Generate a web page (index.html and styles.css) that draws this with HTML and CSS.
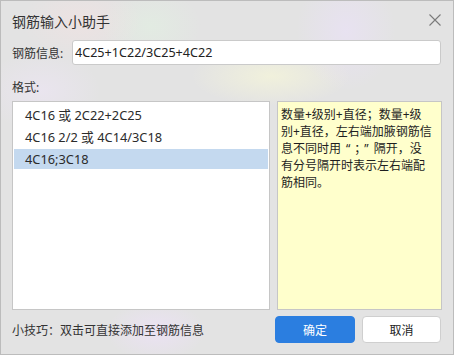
FILE: index.html
```html
<!DOCTYPE html>
<html lang="zh-CN">
<head>
<meta charset="UTF-8" />
<title>钢筋输入小助手</title>
<link rel="stylesheet" href="styles.css">
</head>
<body>

<div class="dialog">
  <div class="titlebar">
    <span class="title">钢筋输入小助手</span>
    <svg class="close" width="12" height="12" viewBox="0 0 12 12">
      <path d="M0.5 0.5 L11.5 11.5 M11.5 0.5 L0.5 11.5" stroke="#7a7a7a" stroke-width="1.1" fill="none"/>
    </svg>
  </div>

  <div class="field">
    <label for="rebarInput">钢筋信息:</label>
    <input id="rebarInput" type="text" value="4C25+1C22/3C25+4C22" />
  </div>

  <div class="section-label">格式:</div>

  <div class="panels">
    <ul class="format-list">
      <li>4C16 或 2C22+2C25</li>
      <li>4C16 2/2 或 4C14/3C18</li>
      <li class="selected">4C16;3C18</li>
    </ul>
    <div class="hint-box">数量+级别+直径；数量+级<br>别+直径，左右端加腋钢筋信<br>息不同时用<span class="sep">“；”</span>隔开，没<br>有分号隔开时表示左右端配<br>筋相同。</div>
  </div>

  <div class="footer">
    <span class="tip">小技巧：双击可直接添加至钢筋信息</span>
    <div class="buttons">
      <button class="btn primary">确定</button>
      <button class="btn">取消</button>
    </div>
  </div>
</div>

</body>
</html>
```

FILE: styles.css
```css
html, body {
  margin: 0;
  padding: 0;
}

body {
  font-family: "Segoe UI", "Noto Sans", "Noto Sans CJK SC", sans-serif;
  color: #2b2b2b;
}

.dialog {
  box-sizing: border-box;
  width: 454px;
  height: 355px;
  border: 1px solid #bcbcbc;
  padding: 0 12px 0 11px;
  background:
    radial-gradient(ellipse 60px 40px at 80px 20px, rgba(255, 225, 225, 0.35), transparent),
    radial-gradient(ellipse 50px 40px at 150px 25px, rgba(225, 245, 225, 0.45), transparent),
    radial-gradient(ellipse 50px 60px at 345px 30px, rgba(235, 225, 250, 0.6), transparent),
    radial-gradient(ellipse 80px 30px at 270px 75px, rgba(250, 250, 215, 0.6), transparent),
    radial-gradient(ellipse 60px 40px at 40px 90px, rgba(240, 230, 250, 0.5), transparent),
    radial-gradient(ellipse 50px 30px at 155px 330px, rgba(238, 225, 250, 0.7), transparent),
    #e3e3e3;
}

.titlebar {
  height: 39px;
  display: flex;
  align-items: center;
  justify-content: space-between;
}

.title {
  font-size: 14px;
  color: #333;
}

.close {
  margin-top: -2px;
}

.field {
  display: flex;
  align-items: center;
  gap: 7px;
  height: 25px;
}

.field label {
  font-size: 12px;
  color: #333;
  width: 53px;
}

.field input {
  flex: 1;
  box-sizing: border-box;
  height: 25px;
  border: 1px solid #cacaca;
  border-radius: 3px;
  padding: 0 2px;
  font-family: inherit;
  font-size: 12.6px;
  color: #222;
  background: #fff;
  outline: none;
}

.section-label {
  font-size: 12px;
  color: #333;
  height: 22px;
  line-height: 22px;
  margin-top: 12px;
}

.panels {
  margin-top: 2px;
  display: grid;
  grid-template-columns: 258px 165px;
  gap: 7px;
  height: 209px;
}

.format-list {
  list-style: none;
  margin: 0;
  padding: 1px;
  background: #fff;
  border: 1px solid #c6c6c6;
}

.format-list li {
  height: 20px;
  line-height: 20px;
  margin-top: 2px;
  padding-left: 11px;
  font-size: 12.8px;
  color: #2b2b2b;
}

.format-list li.selected {
  background: #c4d9ef;
}

.hint-box {
  background: #ffffcc;
  border: 1px solid #c6c6c6;
  padding: 4px 4px 4px 3px;
  font-size: 12px;
  line-height: 17px;
  color: #1e1e1e;
  white-space: nowrap;
  overflow: hidden;
}

.sep {
  margin: 0 5px;
  letter-spacing: 4px;
}

.sep::after {
  content: "";
  margin-left: -4px;
}

.footer {
  margin-top: 6px;
  display: flex;
  align-items: center;
  justify-content: space-between;
  height: 27px;
}

.tip {
  font-size: 12px;
  color: #333;
}

.buttons {
  display: flex;
  gap: 7px;
}

.btn {
  width: 79px;
  height: 27px;
  border: 1px solid #cfcfcf;
  border-radius: 4px;
  background: #fff;
  font-family: inherit;
  font-size: 12px;
  color: #222;
  padding: 0;
}

.btn.primary {
  width: 80px;
  background: #2b7ee0;
  border-color: #2b7ee0;
  color: #fff;
}
```
